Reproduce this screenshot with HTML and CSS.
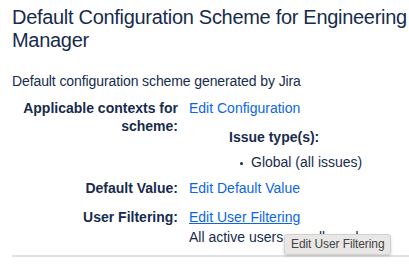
FILE: index.html
```html
<!DOCTYPE html>
<html>
<head>
<meta charset="utf-8">
<link rel="stylesheet" href="styles.css">
</head>
<body>
<div class="page">
  <h2 class="title">Default Configuration Scheme for Engineering Manager</h2>
  <p class="desc">Default configuration scheme generated by Jira</p>
  <div class="fields">
    <div class="field field-contexts">
      <div class="label">Applicable contexts for scheme:</div>
      <div class="value">
        <a class="link" href="#">Edit Configuration</a>
        <div class="context">
          <div class="ctx-title">Issue type(s):</div>
          <ul class="ctx-list"><li>Global (all issues)</li></ul>
        </div>
      </div>
    </div>
    <div class="field field-default">
      <div class="label">Default Value:</div>
      <div class="value"><a class="link" href="#">Edit Default Value</a></div>
    </div>
    <div class="field field-filter">
      <div class="label">User Filtering:</div>
      <div class="value">
        <a class="link hover" href="#">Edit User Filtering</a>
        <div class="note">All active users are allowed</div>
      </div>
    </div>
  </div>
  <div class="rule"></div>
</div>
<div class="tooltip">Edit User Filtering</div>
</body>
</html>
```
FILE: styles.css
```css
html, body {
  margin: 0;
  padding: 0;
  background: #ffffff;
}
body {
  font-family: "Liberation Sans", Arial, sans-serif;
  color: #172b4d;
  font-size: 14px;
  line-height: 20px;
  position: relative;
  height: 267px;
  overflow: hidden;
}
.page {
  padding: 6px 0 0 12px;
}
.title {
  margin: 0;
  font-size: 20px;
  line-height: 23px;
  font-weight: 400;
  letter-spacing: -0.3px;
  color: #172b4d;
}
.desc {
  margin: 19px 0 0 0;
  letter-spacing: -0.1px;
}
.fields {
  display: flex;
  flex-direction: column;
  margin-top: 7px;
}
.field {
  display: flex;
  gap: 11px;
}
.field-default {
  margin-top: 6px;
}
.field-filter {
  margin-top: 9px;
}
.label {
  flex: 0 0 166px;
  font-weight: 700;
  text-align: right;
  line-height: 18px;
  padding-top: 1px;
}
.value {
  flex: 1;
}
.link {
  color: #0c66e4;
  text-decoration: none;
}
.link.hover {
  text-decoration: underline;
}
.context {
  margin: 9px 0 0 40px;
}
.ctx-title {
  font-weight: 700;
}
.ctx-list {
  margin: 5px 0 0 0;
  padding: 0 0 0 22px;
  list-style: none;
}
.ctx-list li {
  position: relative;
}
.ctx-list li::before {
  content: "";
  position: absolute;
  left: -11px;
  top: 10px;
  width: 3px;
  height: 3px;
  border-radius: 50%;
  background: #172b4d;
}
.note {
  line-height: 20px;
}
.rule {
  height: 2px;
  background: #dfe1e6;
  margin-top: 8px;
}
.tooltip {
  position: absolute;
  left: 284px;
  top: 234px;
  height: 19px;
  padding: 0 6px;
  background: #e8e7e5;
  border: 1px solid #d3d2cf;
  border-radius: 3px;
  box-shadow: 0 1px 3px rgba(0,0,0,0.18);
  font-size: 12px;
  line-height: 19px;
  letter-spacing: -0.1px;
  color: #444444;
}
```
